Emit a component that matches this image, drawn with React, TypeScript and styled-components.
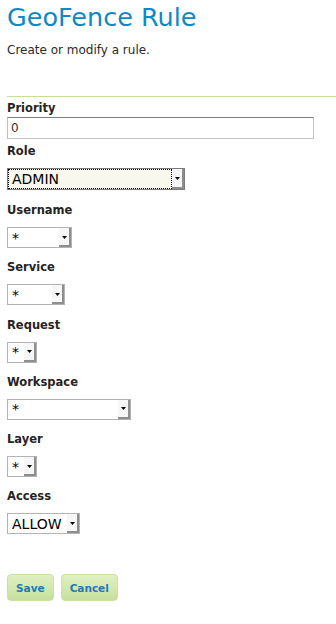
import { useState } from "react";
import styled, { createGlobalStyle } from "styled-components";

const GlobalStyle = createGlobalStyle`
  body {
    margin: 0;
    background: #fff;
    font-family: "DejaVu Sans", "Liberation Sans", sans-serif;
  }
`;

const Page = styled.div`
  padding: 2px 0 0 7px;
`;

const Header = styled.div`
  padding-bottom: 38px;
  border-bottom: 1px solid #c5df9a;
`;

const Title = styled.h1`
  margin: 0;
  font-size: 25.5px;
  line-height: 30px;
  font-weight: normal;
  color: #0f88c6;
`;

const Subtitle = styled.p`
  margin: 11px 0 0;
  font-size: 12px;
  line-height: 15px;
  color: #2a2a2a;
`;

const Form = styled.form`
  margin-top: 4px;
`;

const Field = styled.div<{ $gap: number }>`
  margin-bottom: ${(p) => p.$gap}px;
`;

const Label = styled.label<{ $gap: number }>`
  display: block;
  margin-bottom: ${(p) => p.$gap}px;
  font-size: 11.5px;
  line-height: 14px;
  font-weight: bold;
  color: #27231f;
`;

const TextInput = styled.input`
  box-sizing: border-box;
  display: block;
  width: 307px;
  height: 22px;
  margin: 0;
  padding: 0 3px;
  border: 1px solid #c2c2c2;
  border-top-color: #7c7c7c;
  background: #fff;
  font-family: "DejaVu Sans", sans-serif;
  font-size: 12px;
  color: #333;
  outline: none;
`;

const SelectFrame = styled.span<{ $width: number; $focused?: boolean }>`
  box-sizing: border-box;
  display: flex;
  width: ${(p) => p.$width}px;
  height: ${(p) => (p.$focused ? 22 : 21)}px;
  border: 1px solid ${(p) => (p.$focused ? "#7a7a7a" : "#b3b3b3")};
  background: ${(p) => (p.$focused ? "#f8f8ee" : "#fff")};
`;

const SelectValue = styled.select<{ $focused?: boolean }>`
  appearance: none;
  flex: 1;
  min-width: 0;
  height: 100%;
  margin: 0;
  padding: 0 0 0 ${(p) => (p.$focused ? 3 : 4)}px;
  border: ${(p) => (p.$focused ? "1px dotted #000" : "none")};
  border-radius: 0;
  background: transparent;
  font-family: "DejaVu Sans", sans-serif;
  font-size: 14px;
  color: #000;
  outline: none;
`;

const DropButton = styled.span`
  box-sizing: border-box;
  display: flex;
  align-items: center;
  justify-content: center;
  width: 12px;
  flex: none;
  background: #f6f6f6;
  border-right: 2px solid #8e8e8e;
  border-bottom: 2px solid #8e8e8e;
  padding-top: 1px;
`;

const Buttons = styled.div`
  display: flex;
  gap: 7px;
  margin-top: 40px;
`;

const Button = styled.button`
  height: 27px;
  padding: 0 8px;
  border: 1px solid #c9e1a3;
  border-radius: 4px;
  background: linear-gradient(#e0f0c2, #c6e09c);
  font-family: "DejaVu Sans", sans-serif;
  font-size: 10.5px;
  font-weight: bold;
  color: #1f7bb0;
  cursor: pointer;
`;

type SelectProps = {
  id: string;
  label: string;
  width: number;
  options: string[];
  focused?: boolean;
};

function Select({ id, label, width, options, focused }: SelectProps) {
  const [value, setValue] = useState(options[0]);
  return (
    <Field $gap={focused ? 13 : 12.3}>
      <Label htmlFor={id} $gap={10}>
        {label}
      </Label>
      <SelectFrame $width={width} $focused={focused}>
        <SelectValue
          id={id}
          $focused={focused}
          value={value}
          onChange={(e) => setValue(e.target.value)}
        >
          {options.map((o) => (
            <option key={o}>{o}</option>
          ))}
        </SelectValue>
        <DropButton>
          <svg width="5" height="3" viewBox="0 0 5 3">
            <polygon points="0,0 5,0 2.5,3" fill="#000" />
          </svg>
        </DropButton>
      </SelectFrame>
    </Field>
  );
}

export default function App() {
  const [priority, setPriority] = useState("0");

  return (
    <Page>
      <GlobalStyle />
      <Header>
        <Title>GeoFence Rule</Title>
        <Subtitle>Create or modify a rule.</Subtitle>
      </Header>
      <Form onSubmit={(e) => e.preventDefault()}>
        <Field $gap={5}>
          <Label htmlFor="priority" $gap={2}>
            Priority
          </Label>
          <TextInput
            id="priority"
            value={priority}
            onChange={(e) => setPriority(e.target.value)}
          />
        </Field>
        <Select id="role" label="Role" width={178} options={["ADMIN", "USER"]} focused />
        <Select id="username" label="Username" width={65} options={["*"]} />
        <Select id="service" label="Service" width={58} options={["*"]} />
        <Select id="request" label="Request" width={30} options={["*"]} />
        <Select id="workspace" label="Workspace" width={124} options={["*"]} />
        <Select id="layer" label="Layer" width={30} options={["*"]} />
        <Select id="access" label="Access" width={73} options={["ALLOW", "DENY"]} />
        <Buttons>
          <Button type="submit">Save</Button>
          <Button type="button">Cancel</Button>
        </Buttons>
      </Form>
    </Page>
  );
}
